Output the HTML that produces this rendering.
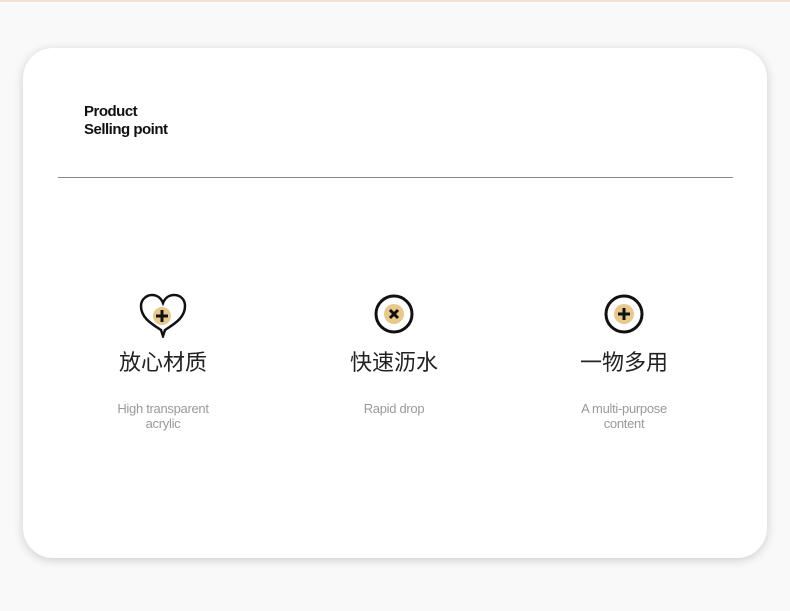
<!DOCTYPE html>
<html><head><meta charset="utf-8"><style>
body{margin:0;width:790px;height:611px;background:#f9f9f9;position:relative;overflow:hidden;font-family:"Liberation Sans","Noto Sans CJK SC",sans-serif}
.top{position:absolute;left:0;top:0;width:790px;height:2px;background:#f1e1d4}
.card{position:absolute;left:23px;top:48px;width:744px;height:510px;background:#fff;border-radius:30px;box-shadow:0 2px 10px rgba(0,0,0,.18)}
.t{position:absolute;left:84px;top:103px;font-size:15px;font-weight:bold;line-height:18px;color:#111;letter-spacing:-0.5px}
.line{position:absolute;left:58px;top:177px;width:675px;height:1px;background:#8a8a8a}
.col{position:absolute;width:200px;text-align:center}
.ic{top:292px}
.cn{top:348px;font-size:22px;color:#222;line-height:30px}
.en{top:401px;font-size:13px;color:#9a9a9a;line-height:15px;letter-spacing:-0.3px}
svg{display:block;margin:0 auto}
</style></head><body>
<div class="top"></div>
<div class="card"></div>
<div class="t">Product<br>Selling point</div>
<div class="line"></div>
<div class="col ic" style="left:63px">
<svg width="50" height="46" viewBox="0 0 50 46"><path d="M25 44 L23 38 C14 32 3 26 3 14 C3 7 9 3 14 3 C19 3 23 6 25 11 C27 6 31 3 36 3 C42 3 47 7 47 14 C47 26 36 32 27 38 Z" fill="none" stroke="#111" stroke-width="2.5"/><circle cx="24" cy="24" r="9" fill="#e8c98a"/><path d="M24 18v12M18 24h12" stroke="#111" stroke-width="3"/></svg></div>
<div class="col cn" style="left:63px">放心材质</div>
<div class="col en" style="left:63px">High transparent<br>acrylic</div>
<div class="col ic" style="left:294px;top:293px">
<svg width="42" height="42" viewBox="0 0 42 42"><circle cx="21" cy="21" r="18" fill="none" stroke="#111" stroke-width="3"/><circle cx="21" cy="21" r="10" fill="#e8c98a"/><path d="M17 17l8 8M25 17l-8 8" stroke="#111" stroke-width="3"/></svg></div>
<div class="col cn" style="left:294px">快速沥水</div>
<div class="col en" style="left:294px">Rapid drop</div>
<div class="col ic" style="left:524px;top:293px">
<svg width="42" height="42" viewBox="0 0 42 42"><circle cx="21" cy="21" r="18" fill="none" stroke="#111" stroke-width="3"/><circle cx="21" cy="21" r="10" fill="#e8c98a"/><path d="M21 15v12M15 21h12" stroke="#111" stroke-width="3"/></svg></div>
<div class="col cn" style="left:524px">一物多用</div>
<div class="col en" style="left:524px">A multi-purpose<br>content</div>
</body></html>
